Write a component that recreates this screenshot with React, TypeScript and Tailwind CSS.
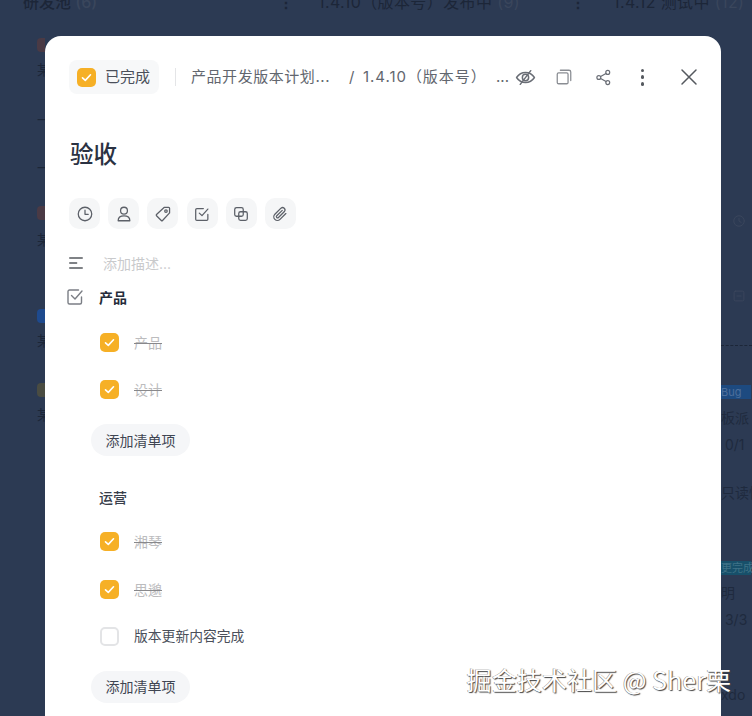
import React from "react";

const FONT = "font-['Inter','Noto_Sans_CJK_SC',sans-serif]";

function Svg({ size = 20, children, className = "" }: { size?: number; children: React.ReactNode; className?: string }) {
  return (
    <svg width={size} height={size} viewBox="0 0 20 20" fill="none" stroke="currentColor" strokeWidth={1.4} strokeLinecap="round" strokeLinejoin="round" className={className}>
      {children}
    </svg>
  );
}

function Check({ box = 19 }: { box?: number }) {
  return (
    <span className="flex shrink-0 items-center justify-center rounded-[5px] bg-[#f6b026]" style={{ width: box, height: box }}>
      <svg width="13" height="13" viewBox="0 0 13 13" fill="none" stroke="#fff" strokeWidth={1.6} strokeLinecap="round" strokeLinejoin="round">
        <path d="M2.5 6.8 5.3 9.4 10.5 3.8" />
      </svg>
    </span>
  );
}

function Item({ text, done = true }: { text: string; done?: boolean }) {
  return (
    <div className="flex h-[47.5px] items-center gap-[15px] pl-[31px]">
      {done ? <Check /> : <span className="h-[19px] w-[19px] shrink-0 rounded-[5px] border-2 border-[#e3e4e6] bg-white" />}
      {done ? (
        <span className="relative text-[14px] text-[#bcbcbe]">
          {text}
          <span className="absolute left-0 right-0 top-[11px] h-px bg-[#88888b]" />
        </span>
      ) : (
        <span className="text-[13.8px] text-[#4a4f5a]">{text}</span>
      )}
    </div>
  );
}

function AddBtn() {
  return (
    <button className="ml-[22px] flex h-[32px] w-[99px] items-center justify-center rounded-full bg-[#f5f6f8] text-[14px] text-[#3f4552]">
      添加清单项
    </button>
  );
}

function ToolBtn({ children }: { children: React.ReactNode }) {
  return <span className="flex h-[31px] w-[31px] items-center justify-center rounded-[10px] bg-[#f5f6f7] text-[#5c6068]">{children}</span>;
}

function Dim({ children, h, cls = "" }: { children?: React.ReactNode; h: number; cls?: string }) {
  return (
    <div className={`whitespace-nowrap ${cls}`} style={{ height: h }}>
      {children}
    </div>
  );
}

export default function App() {
  return (
    <div className={`relative h-[716px] w-[752px] overflow-hidden bg-[#2c3a53] ${FONT}`}>
      {/* dimmed board behind the dialog */}
      <div className="flex h-[36px] items-start text-[16px] leading-[16px] text-[#1c2638]">
        <span className="-mt-[6px] ml-[23px] w-[255px] font-medium">研发池 <span className="text-[#3a465c]">(6)</span></span>
        <span className="-mt-[6px] w-[40px] font-bold">⋮</span>
        <span className="-mt-[6px] w-[252px] tracking-[0.4px]">1.4.10（版本号）发布中 <span className="text-[#3a465c]">(9)</span></span>
        <span className="-mt-[6px] w-[43px] font-bold">⋮</span>
        <span className="-mt-[6px] whitespace-nowrap tracking-[0.4px]">1.4.12 测试中 <span className="text-[#3a465c]">(12)</span></span>
      </div>
      <div className="flex">
        <div className="w-[45px] overflow-hidden pl-[37px] pt-[2px] text-[14px] leading-[18px] text-[#1c2638]">
          <Dim h={23}><span className="block h-[14px] w-[14px] rounded-[4px] bg-[#4a3a45]" /></Dim>
          <Dim h={50}>某</Dim>
          <Dim h={48}>一</Dim>
          <Dim h={47}>一</Dim>
          <Dim h={25}><span className="block h-[14px] w-[14px] rounded-[4px] bg-[#4a3a45]" /></Dim>
          <Dim h={78}>某</Dim>
          <Dim h={23}><span className="block h-[14px] w-[14px] rounded-[4px] bg-[#1e4a8e]" /></Dim>
          <Dim h={51}>某</Dim>
          <Dim h={23}><span className="block h-[14px] w-[14px] rounded-[4px] bg-[#4a4c42]" /></Dim>
          <Dim h={20}>某</Dim>
        </div>
        <div className="ml-[676px] w-[31px] overflow-hidden pt-[178px] text-[14px] leading-[18px] text-[#1f2a3e]">
          <div className="ml-[11px] flex h-[75px] items-start text-[#3a465c]">
            <Svg size={14}><circle cx="10" cy="10" r="7.5" /><path d="M10 6v4l3 2" /></Svg>
          </div>
          <div className="ml-[11px] flex h-[56px] items-start text-[#3a465c]">
            <Svg size={14}><rect x="3" y="3" width="14" height="14" rx="2" /><path d="M7 10h6" /></Svg>
          </div>
          <div className="h-[40px] border-t border-dashed border-[#1c2638]" />
          <div className="h-[14px] w-[30px] whitespace-nowrap bg-[#1d4a80] text-[11px] leading-[14px] text-[#4d6f9c]">Bug</div>
          <Dim h={37} cls="pt-[10px]">板派</Dim>
          <Dim h={48}>&nbsp;0/1</Dim>
          <Dim h={77}>只读性</Dim>
          <div className="h-[14px] w-[30px] whitespace-nowrap bg-[#17506a] text-[11px] leading-[14px] text-[#3f7287]">更完成</div>
          <Dim h={36} cls="pt-[9px]">明</Dim>
          <Dim h={75}>&nbsp;3/3</Dim>
          <Dim h={20}>xdo</Dim>
        </div>
      </div>

      {/* dialog */}
      <div className="absolute left-[45px] top-[36px] h-[700px] w-[676px] rounded-[16px] bg-white pl-[24px] pt-[24px]">
        <header className="flex h-[34px] items-center">
          <div className="flex h-[34px] w-[90px] items-center gap-[9px] rounded-[8px] bg-[#f7f8f9] pl-[8px] text-[15px] text-[#4a4f5a]">
            <Check />
            <span>已完成</span>
          </div>
          <span className="ml-[16px] h-[18px] w-px bg-[#e4e5e7]" />
          <span className="ml-[15px] w-[139px] whitespace-nowrap text-[15px] tracking-[0.55px] text-[#62666e]">产品开发版本计划...</span>
          <span className="ml-[19px] w-[14px] text-[15px] text-[#62666e]">/</span>
          <span className="w-[121px] whitespace-nowrap text-[15px] tracking-[0.95px] text-[#62666e]">1.4.10（版本号）</span>
          <span className="ml-[12px] w-[19px] text-[15px] text-[#62666e]">...</span>
          <span className="text-[#6a6e76]">
            <Svg size={21}>
              <path d="M1.5 10C3.6 6.8 6.4 5.200 10 5.200s6.400 1.600 8.500 4.800c-2.100 3.200-4.900 4.800-8.500 4.800S3.600 13.200 1.500 10Z" />
              <circle cx="10" cy="10" r="3" />
              <path d="M15 3.500 5 16.500" />
            </Svg>
          </span>
          <span className="ml-[19px] text-[#8a8d93]">
            <Svg size={18}>
              <rect x="2.5" y="5.5" width="12" height="12" rx="1.5" />
              <path d="M6 2.5h9.5a2 2 0 0 1 2 2V14" />
            </Svg>
          </span>
          <span className="ml-[22px] text-[#6a6e76]">
            <Svg size={17}>
              <circle cx="15" cy="4" r="2.3" />
              <circle cx="4.5" cy="10" r="2.3" />
              <circle cx="15" cy="16" r="2.3" />
              <path d="M6.6 8.9 13 5.2M6.6 11.1l6.4 3.7" />
            </Svg>
          </span>
          <span className="ml-[22px] flex h-[19px] w-[17px] flex-col items-center justify-between py-[1px]">
            <i className="h-[3.5px] w-[3.5px] rounded-full bg-[#55595f]" />
            <i className="h-[3.5px] w-[3.5px] rounded-full bg-[#55595f]" />
            <i className="h-[3.5px] w-[3.5px] rounded-full bg-[#55595f]" />
          </span>
          <span className="ml-[29px] text-[#55595f]">
            <svg width="18" height="18" viewBox="0 0 18 18" fill="none" stroke="currentColor" strokeWidth={1.5} strokeLinecap="round">
              <path d="M2 2l14 14M16 2 2 16" />
            </svg>
          </span>
        </header>

        <h1 className="ml-[1px] mt-[43px] h-[36px] text-[23.5px] font-medium leading-[36px] text-[#2b3242]">验收</h1>

        <div className="mt-[25px] flex gap-[8.2px]">
          <ToolBtn>
            <Svg size={18}><circle cx="10" cy="10" r="7.5" /><path d="M10 5.800V10.300h3.600" /></Svg>
          </ToolBtn>
          <ToolBtn>
            <Svg size={18}><circle cx="10" cy="6.300" r="3.800" /><path d="M3.500 17.500c0-3.600 2.600-5.400 6.500-5.400s6.500 1.800 6.500 5.400Z" /></Svg>
          </ToolBtn>
          <ToolBtn>
            <Svg size={18}><path d="M11.200 2.700h5.100a1 1 0 0 1 1 1v5.100L9.500 17.200a1 1 0 0 1-1.400 0l-5.300-5.300a1 1 0 0 1 0-1.400Z" /><circle cx="13.300" cy="6.700" r="1.400" /></Svg>
          </ToolBtn>
          <ToolBtn>
            <Svg size={18}><path d="M16.500 10.500v5.200a1.300 1.300 0 0 1-1.300 1.300H4.300A1.300 1.300 0 0 1 3 15.700V5.300A1.300 1.300 0 0 1 4.300 4h7.200" /><path d="M7 9l3 2.800L16.500 4.500" /></Svg>
          </ToolBtn>
          <ToolBtn>
            <Svg size={18}><rect x="3" y="3" width="9.500" height="9.500" rx="2" /><path d="M7.500 12.500V9.500a2 2 0 0 1 2-2h5.500a2 2 0 0 1 2 2V15a2 2 0 0 1-2 2H9.500a2 2 0 0 1-2-2Z" /></Svg>
          </ToolBtn>
          <ToolBtn>
            <Svg size={18}><path d="M16.500 9.500 10 16a4 4 0 0 1-5.700-5.700l6.800-6.800a2.700 2.700 0 0 1 3.800 3.800L8.300 13.900a1.300 1.300 0 0 1-1.900-1.900l6.100-6" /></Svg>
          </ToolBtn>
        </div>

        <div className="mt-[23px] flex h-[22px] items-center">
          <svg width="14" height="12" viewBox="0 0 14 12" stroke="#55595f" strokeWidth={1.3} strokeLinecap="round" className="shrink-0">
            <path d="M.7 1h12.600M.7 6h7M.7 11h12.600" />
          </svg>
          <span className="ml-[20px] text-[14px] text-[#c9cacc]">添加描述...</span>
        </div>

        <div className="mt-[11px] flex h-[24px] items-center">
          <span className="-ml-[4px] text-[#7b7e85]">
            <Svg size={20}><path d="M16.500 10v5.500a1.500 1.500 0 0 1-1.500 1.500H4.500A1.500 1.500 0 0 1 3 15.500V4.500A1.500 1.500 0 0 1 4.500 3h9" /><path d="M6.500 8.500 10 12l7-8" /></Svg>
          </span>
          <span className="ml-[14px] text-[14px] font-semibold text-[#262c3a]">产品</span>
        </div>
        <div className="mt-[9.500px]">
          <Item text="产品" />
          <Item text="设计" />
        </div>
        <div className="mt-[10.500px]"><AddBtn /></div>

        <div className="ml-[30px] mt-[30px] h-[24px] text-[14px] font-medium leading-[24px] text-[#383e4b]">运营</div>
        <div className="mt-[8px]">
          <Item text="湘琴" />
          <Item text="思邈" />
          <Item text="版本更新内容完成" done={false} />
        </div>
        <div className="mt-[10px]"><AddBtn /></div>
      </div>

      {/* watermark */}
      <div className="absolute bottom-[21px] right-[21px] whitespace-nowrap text-[25.1px] leading-[32px] text-white font-['Noto_Sans_CJK_SC',sans-serif] [text-shadow:1px_1px_1px_#444,-0.5px_-0.5px_0.5px_#777]">
        掘金技术社区 @ Sher栗
      </div>
    </div>
  );
}
